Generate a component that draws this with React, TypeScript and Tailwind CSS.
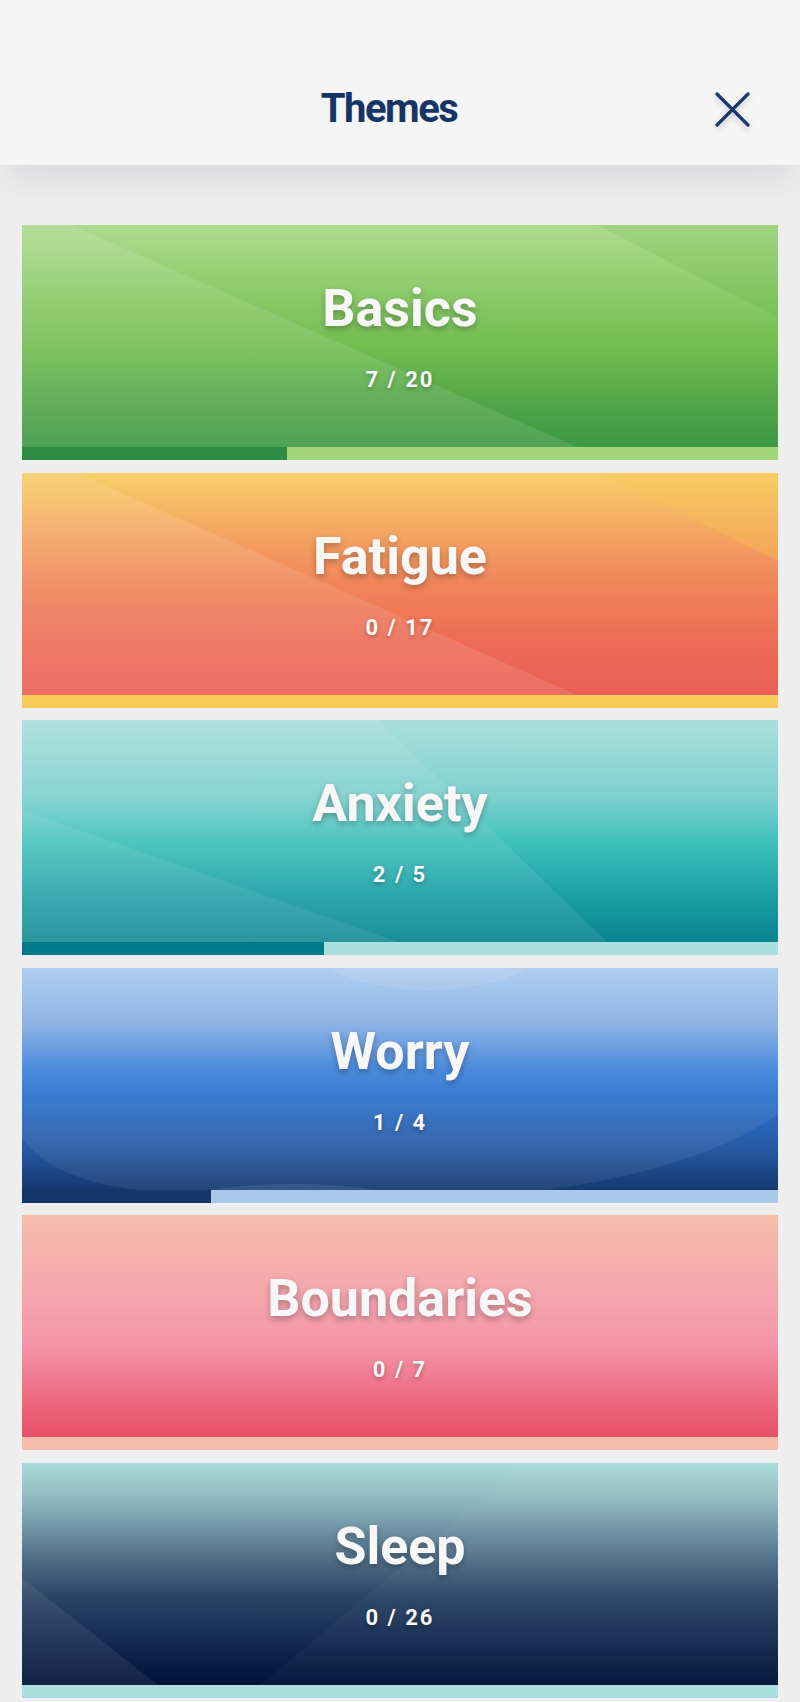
import React from 'react'

interface Shape {
  d: string
  fill: string
  opacity: number
}

interface Theme {
  name: string
  done: number
  total: number
  bg: string
  barFill: string
  barRest: string
  shapes: Shape[]
  ellipses?: { cx: number; cy: number; rx: number; ry: number; opacity: number }[]
}

const themes: Theme[] = [
  {
    name: 'Basics',
    done: 7,
    total: 20,
    bg: 'bg-[linear-gradient(180deg,#aedb8e_0%,#8ccb6a_30%,#72bd50_55%,#52a548_80%,#3d9845_100%)]',
    barFill: 'bg-[#2f8c44]',
    barRest: 'bg-[#a4d679]',
    shapes: [
      { d: 'M0 0 L49 0 L555 222 L0 222 Z', fill: '#ffffff', opacity: 0.1 },
      { d: 'M575 0 L756 0 L756 92 Z', fill: '#5fb040', opacity: 0.18 },
    ],
  },
  {
    name: 'Fatigue',
    done: 0,
    total: 17,
    bg: 'bg-[linear-gradient(180deg,#f8cf68_0%,#f4a862_25%,#f1855a_50%,#ed6c55_75%,#ea5e56_100%)]',
    barFill: 'bg-[#f6cb57]',
    barRest: 'bg-[#f6cb57]',
    shapes: [
      { d: 'M0 0 L55 0 L555 222 L0 222 Z', fill: '#ffffff', opacity: 0.1 },
      { d: 'M578 0 L756 0 L756 88 Z', fill: '#f7c552', opacity: 0.35 },
    ],
  },
  {
    name: 'Anxiety',
    done: 2,
    total: 5,
    bg: 'bg-[linear-gradient(180deg,#abdede_0%,#7dd0cf_35%,#3fc1bc_55%,#1a9ea4_80%,#08858f_100%)]',
    barFill: 'bg-[#027a8c]',
    barRest: 'bg-[#aadfdf]',
    shapes: [
      { d: 'M0 0 L356 0 L585 222 L0 222 Z', fill: '#ffffff', opacity: 0.08 },
      { d: 'M0 90 L376 222 L0 222 Z', fill: '#ffffff', opacity: 0.07 },
    ],
  },
  {
    name: 'Worry',
    done: 1,
    total: 4,
    bg: 'bg-[linear-gradient(180deg,#a9caee_0%,#86afe4_25%,#3d82da_46%,#2d74d0_56%,#275ba7_80%,#14396f_100%)]',
    barFill: 'bg-[#12366a]',
    barRest: 'bg-[#a8c9ea]',
    shapes: [
      {
        d: 'M0 170 Q30 212 116 222 L524 222 Q680 200 756 146 L756 0 L0 0 Z',
        fill: '#ffffff',
        opacity: 0.07,
      },
    ],
    ellipses: [
      { cx: 406, cy: -40, rx: 133, ry: 62, opacity: 0.1 },
      { cx: 271, cy: 240, rx: 125, ry: 24, opacity: 0.08 },
    ],
  },
  {
    name: 'Boundaries',
    done: 0,
    total: 7,
    bg: 'bg-[linear-gradient(180deg,#f5bcac_0%,#f5a0ac_45%,#f593a6_60%,#ee6f83_80%,#e94f68_100%)]',
    barFill: 'bg-[#f6bcac]',
    barRest: 'bg-[#f6bcac]',
    shapes: [],
  },
  {
    name: 'Sleep',
    done: 0,
    total: 26,
    bg: 'bg-[linear-gradient(180deg,#a9dcdc_0%,#8cb5be_18%,#5c7c93_38%,#2c4466_60%,#142a50_80%,#001238_100%)]',
    barFill: 'bg-[#aadfdf]',
    barRest: 'bg-[#aadfdf]',
    shapes: [
      { d: 'M503 0 L756 0 L756 222 L238 222 Z', fill: '#ffffff', opacity: 0.03 },
      { d: 'M0 115 L136 222 L0 222 Z', fill: '#ffffff', opacity: 0.07 },
    ],
  },
]

const ThemeCard = ({ theme }: { theme: Theme }) => {
  const { name, done, total, bg, barFill, barRest, shapes, ellipses } = theme
  const pct = (done / total) * 100

  return (
    <div className="flex flex-col">
      <div className={`relative h-[222px] overflow-hidden ${bg}`}>
        <svg
          className="absolute inset-0 h-full w-full"
          viewBox="0 0 756 222"
          preserveAspectRatio="none"
        >
          {shapes.map((s, i) => (
            <path key={i} d={s.d} fill={s.fill} fillOpacity={s.opacity} />
          ))}
          {ellipses?.map((e, i) => (
            <ellipse key={i} cx={e.cx} cy={e.cy} rx={e.rx} ry={e.ry} fill="#ffffff" fillOpacity={e.opacity} />
          ))}
        </svg>
        <div className="relative flex flex-col items-center pt-[58px] text-[#f7f7f7]">
          <div className="text-[52px] leading-[52px] font-bold [text-shadow:0_3px_6px_rgba(0,0,0,0.28)]">
            {name}
          </div>
          <div className="mt-[34px] text-[22px] leading-[22px] font-bold tracking-[2px] [text-shadow:0_2px_4px_rgba(0,0,0,0.28)]">
            {done} / {total}
          </div>
        </div>
      </div>
      <div className={`flex h-[13px] ${barRest}`}>
        <div className={`h-full ${barFill}`} style={{ width: `${pct}%` }} />
      </div>
    </div>
  )
}

export default function App() {
  return (
    <div className="min-h-screen bg-[#efeeee] font-['Roboto',sans-serif]">
      <header className="relative z-10 flex h-[165px] items-start justify-center bg-[#f5f5f5] shadow-[0_18px_36px_-8px_rgba(40,40,80,0.14)]">
        <h1 className="mr-[22px] pt-[89px] text-[40px] leading-[40px] font-bold tracking-[-1.5px] text-[#163567]">
          Themes
        </h1>
        <button className="absolute right-[50px] top-[92px] h-[35px] w-[35px] text-[#1b3a6b] drop-shadow-[0_3px_3px_rgba(0,0,0,0.18)]">
          <svg viewBox="0 0 35 35" className="h-full w-full" fill="none" stroke="currentColor" strokeWidth="3.2" strokeLinecap="round">
            <path d="M2 2 L33 33 M33 2 L2 33" />
          </svg>
        </button>
      </header>
      <main className="flex flex-col gap-[12.5px] px-[22px] pt-[60px] pb-[7px]">
        {themes.map((t) => (
          <ThemeCard key={t.name} theme={t} />
        ))}
      </main>
    </div>
  )
}
